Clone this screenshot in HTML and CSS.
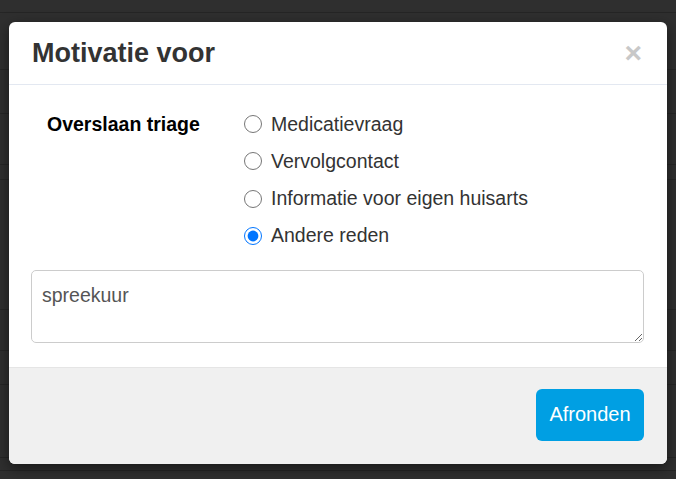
FILE: index.html
```html
<!DOCTYPE html>
<html lang="nl">
<head>
<meta charset="utf-8">
<title>Motivatie voor</title>
<link rel="stylesheet" href="styles.css">
</head>
<body>
<div class="modal">
  <div class="modal-header">
    <h4 class="modal-title">Motivatie voor</h4>
    <span class="close">&times;</span>
  </div>
  <div class="modal-body">
    <div class="form-row">
      <div class="row-label">Overslaan triage</div>
      <div class="options">
        <label class="option"><input type="radio" name="reden"><span>Medicatievraag</span></label>
        <label class="option"><input type="radio" name="reden"><span>Vervolgcontact</span></label>
        <label class="option"><input type="radio" name="reden"><span>Informatie voor eigen huisarts</span></label>
        <label class="option"><input type="radio" name="reden" checked><span>Andere reden</span></label>
      </div>
    </div>
    <textarea class="note">spreekuur</textarea>
  </div>
  <div class="modal-footer">
    <button class="btn-primary" type="button">Afronden</button>
  </div>
</div>
</body>
</html>
```
FILE: styles.css
```css
html, body {
  margin: 0;
  padding: 0;
}
body {
  width: 676px;
  height: 479px;
  overflow: hidden;
  font-family: "Liberation Sans", Arial, sans-serif;
  background-color: #2f2f2f;
  background-image:
    linear-gradient(#252525, #252525),
    linear-gradient(#262626, #262626),
    linear-gradient(#262626, #262626),
    linear-gradient(#262626, #262626),
    linear-gradient(#262626, #262626),
    linear-gradient(#262626, #262626),
    linear-gradient(#262626, #262626),
    linear-gradient(#262626, #262626),
    linear-gradient(#252525, #252525),
    linear-gradient(#252525, #252525);
  background-repeat: no-repeat;
  background-size: 100% 1px;
  background-position:
    0 12px, 0 69px, 0 113px, 0 164px, 0 179px,
    0 309px, 0 350px, 0 384px, 0 457px, 0 470px;
  padding-top: 22px;
  box-sizing: border-box;
}
.modal {
  width: 658px;
  margin-left: 9px;
  background: #fff;
  border-radius: 6px;
  box-shadow: 0 4px 14px rgba(0, 0, 0, 0.5);
  overflow: hidden;
}
.modal-header {
  display: flex;
  align-items: center;
  justify-content: space-between;
  padding: 16px 25px 16px 23px;
  border-bottom: 1px solid #e3e8f1;
}
.modal-title {
  margin: 0;
  font-size: 27px;
  line-height: 30px;
  font-weight: bold;
  color: #333;
}
.close {
  font-size: 30px;
  line-height: 30px;
  font-weight: bold;
  color: #c8c8c8;
}
.modal-body {
  padding: 25px 23px 24px 22px;
}
.form-row {
  display: grid;
  grid-template-columns: 213px 1fr;
}
.row-label {
  padding-left: 16px;
  font-size: 19.5px;
  line-height: 28px;
  font-weight: bold;
  color: #000;
}
.options {
  display: flex;
  flex-direction: column;
  gap: 9.33px;
}
.option {
  display: flex;
  align-items: center;
  height: 28px;
  font-size: 19.5px;
  color: #333;
}
.option input {
  width: 18px;
  height: 18px;
  margin: 0 9px 0 0;
}
.note {
  display: block;
  box-sizing: border-box;
  width: 613px;
  height: 73px;
  margin-top: 20px;
  padding: 10px;
  border: 1px solid #ccc;
  border-radius: 5px;
  font-family: "Liberation Sans", Arial, sans-serif;
  font-size: 19.5px;
  line-height: 28px;
  color: #555;
}
.modal-footer {
  display: flex;
  justify-content: flex-end;
  padding: 21px 23px 23px;
  border-top: 1px solid #e5e5e5;
  background: #f0f0f0;
}
.btn-primary {
  height: 52px;
  width: 108px;
  padding: 0;
  border: none;
  border-radius: 6px;
  background: #009fe3;
  color: #fff;
  font-family: "Liberation Sans", Arial, sans-serif;
  font-size: 20px;
}
```
